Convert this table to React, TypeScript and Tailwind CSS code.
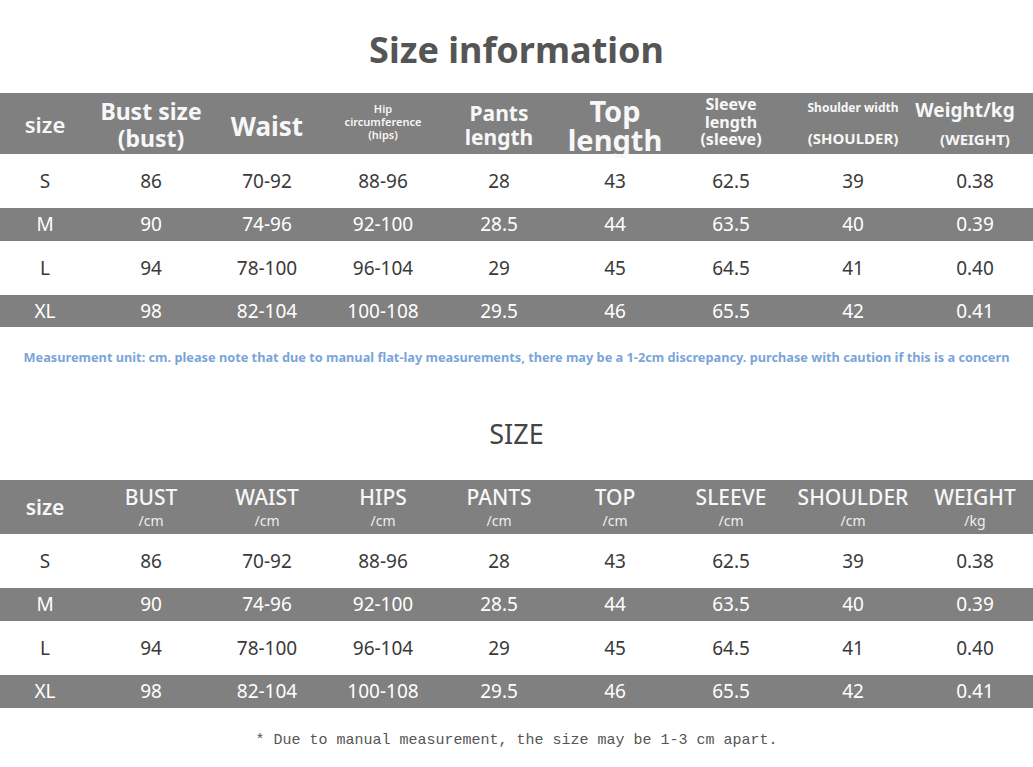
import React from "react";

const cols = "grid grid-cols-[93px_116px_116px_116px_116px_116px_116px_128px_116px]";

const rows = [
  ["S", "86", "70-92", "88-96", "28", "43", "62.5", "39", "0.38"],
  ["M", "90", "74-96", "92-100", "28.5", "44", "63.5", "40", "0.39"],
  ["L", "94", "78-100", "96-104", "29", "45", "64.5", "41", "0.40"],
  ["XL", "98", "82-104", "100-108", "29.5", "46", "65.5", "42", "0.41"],
];

function DataRows({ heights }: { heights: string[] }) {
  return (
    <>
      {rows.map((r, i) => {
        const gray = i % 2 === 1;
        return (
          <div
            key={r[0]}
            className={`${cols} ${heights[i]} ${gray ? "bg-[#808080] text-white" : "bg-white text-[#3a3a3a]"} text-[19px]`}
          >
            {r.map((c, j) => (
              <div key={j} className={`flex items-center justify-center ${j === 0 ? "pr-[3px]" : ""}`}>
                {c}
              </div>
            ))}
          </div>
        );
      })}
    </>
  );
}

export default function App() {
  return (
    <div
      className="w-[1033px] h-[767px] bg-white overflow-hidden"
      style={{ fontFamily: '"Noto Sans", "Open Sans", sans-serif' }}
    >
      <div className="h-[93px] flex items-center justify-center pt-[6px]">
        <h1 className="text-[36px] font-bold text-[#555555] leading-none">Size information</h1>
      </div>

      {/* Table 1 */}
      <div className={`${cols} h-[61px] bg-[#808080] text-[#f7f7f7]`}>
        <div className="flex items-center justify-center text-[22px] font-semibold leading-none pr-[3px]">size</div>
        <div className="flex flex-col items-center justify-center text-[23px] font-bold leading-[27px] pt-[2px]">
          <span>Bust size</span>
          <span>(bust)</span>
        </div>
        <div className="flex items-center justify-center text-[26px] font-bold leading-none pt-[4px]">Waist</div>
        <div className="flex flex-col items-center justify-center text-[11px] font-semibold leading-[13px] pb-[4px]">
          <span>Hip</span>
          <span>circumference</span>
          <span>(hips)</span>
        </div>
        <div className="flex flex-col items-center justify-center text-[21px] font-bold leading-[24px] pt-[2px]">
          <span>Pants</span>
          <span>length</span>
        </div>
        <div className="flex flex-col items-center justify-center text-[29px] font-bold leading-[29px] pt-[2px]">
          <span className="leading-[29px]">Top</span>
          <span className="leading-[29px]">length</span>
        </div>
        <div className="flex flex-col items-center justify-center text-[16px] font-bold leading-[17.5px] pb-[2px]">
          <span>Sleeve</span>
          <span>length</span>
          <span>(sleeve)</span>
        </div>
        <div className="flex flex-col items-center justify-center font-bold">
          <span className="text-[12px] leading-[14px]">Shoulder width</span>
          <span className="text-[15px] leading-[18px] mt-[14px]">(SHOULDER)</span>
        </div>
        <div className="flex flex-col items-center justify-center font-bold">
          <span className="text-[19px] leading-[22px] mr-[20px]">Weight/kg</span>
          <span className="text-[15px] leading-[18px] mt-[9px]">(WEIGHT)</span>
        </div>
      </div>
      <DataRows heights={["h-[54px]", "h-[33px]", "h-[54px]", "h-[32px]"]} />

      <div className="h-[60px] flex items-center justify-center pt-[2px]">
        <p className="text-[12.75px] font-bold text-[#7aa5d8] whitespace-nowrap">
          Measurement unit: cm. please note that due to manual flat-lay measurements, there may be a 1-2cm discrepancy. purchase with caution if this is a concern
        </p>
      </div>

      <div className="h-[93px] flex items-center justify-center">
        <h2 className="text-[27px] text-[#444444] leading-none">SIZE</h2>
      </div>

      {/* Table 2 */}
      <div className={`${cols} h-[54px] bg-[#808080] text-[#f7f7f7]`}>
        <div className="flex items-center justify-center text-[21px] font-semibold leading-none pr-[3px]">size</div>
        {[
          ["BUST", "/cm"],
          ["WAIST", "/cm"],
          ["HIPS", "/cm"],
          ["PANTS", "/cm"],
          ["TOP", "/cm"],
          ["SLEEVE", "/cm"],
          ["SHOULDER", "/cm"],
          ["WEIGHT", "/kg"],
        ].map(([a, b]) => (
          <div key={a} className="flex flex-col items-center justify-center">
            <span className="text-[21px] font-medium leading-[24px]">{a}</span>
            <span className="text-[14px] leading-[18px] mt-[3px] text-[#eeeeee]">{b}</span>
          </div>
        ))}
      </div>
      <DataRows heights={["h-[54px]", "h-[33px]", "h-[54px]", "h-[33px]"]} />

      <div className="h-[59px] flex items-center justify-center pt-[8px]">
        <p
          className="text-[15px] text-[#555555] whitespace-nowrap"
          style={{ fontFamily: '"Liberation Mono", monospace' }}
        >
          * Due to manual measurement, the size may be 1-3 cm apart.
        </p>
      </div>
    </div>
  );
}
